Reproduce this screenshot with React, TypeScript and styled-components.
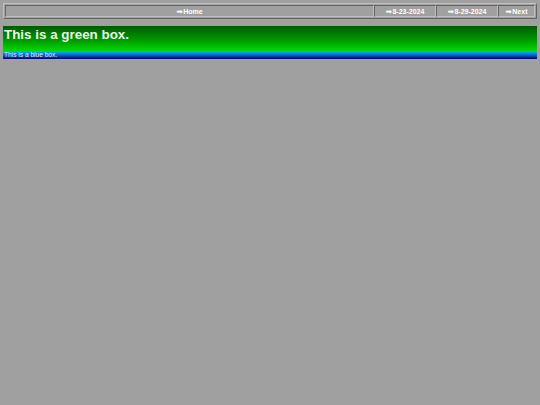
import styled, { createGlobalStyle } from 'styled-components';

const GlobalStyle = createGlobalStyle`
  html, body {
    margin: 0;
    padding: 0;
    background: #a0a0a0;
    font-family: "Liberation Sans", Arial, sans-serif;
  }
  body {
    padding: 3px;
    min-height: 405px;
    box-sizing: border-box;
  }
`;

const Nav = styled.nav`
  display: flex;
  height: 16px;
  box-sizing: border-box;
  border: 1px solid;
  border-color: #c0c0c0 #646464 #646464 #c0c0c0;
  padding: 1px;
`;

const NavCell = styled.a<{ $width?: number }>`
  display: flex;
  align-items: center;
  justify-content: center;
  flex: ${({ $width }) => ($width ? `0 0 ${$width}px` : '1 1 auto')};
  box-sizing: border-box;
  border: 1px solid;
  border-color: #646464 #c0c0c0 #c0c0c0 #646464;
  color: #ffffff;
  font-size: 7px;
  font-weight: bold;
  text-decoration: none;
  white-space: nowrap;
`;

const Arrow = styled.span`
  font-family: "DejaVu Sans", sans-serif;
  font-size: 7.5px;
  font-weight: bold;
  margin-right: 0.5px;
`;

const GreenBox = styled.section`
  margin-top: 7px;
  height: 26px;
  box-sizing: border-box;
  padding: 0 1px;
  background: linear-gradient(to bottom, #005a00 0%, #009a00 55%, #00e000 100%);
`;

const Heading = styled.h1`
  margin: 0;
  padding-top: 1px;
  font-size: 13.4px;
  line-height: 16px;
  font-weight: bold;
  color: #e8f8e8;
`;

const BlueBox = styled.div`
  height: 7px;
  box-sizing: border-box;
  padding: 0 1px;
  background: linear-gradient(to bottom, #00a8f0 0%, #1060c0 45%, #000070 100%);
  color: #e0e8ff;
  font-size: 6.6px;
  line-height: 6px;
  overflow: visible;
  white-space: nowrap;
`;

const links = [
  { label: 'Home' },
  { label: '8-23-2024', width: 62 },
  { label: '8-29-2024', width: 62 },
  { label: 'Next', width: 37 },
];

export default function App() {
  return (
    <>
      <GlobalStyle />
      <Nav>
        {links.map((l) => (
          <NavCell key={l.label} href="#" $width={l.width}>
            <Arrow>➡</Arrow>
            {l.label}
          </NavCell>
        ))}
      </Nav>
      <GreenBox>
        <Heading>This is a green box.</Heading>
      </GreenBox>
      <BlueBox>This is a blue box.</BlueBox>
    </>
  );
}
